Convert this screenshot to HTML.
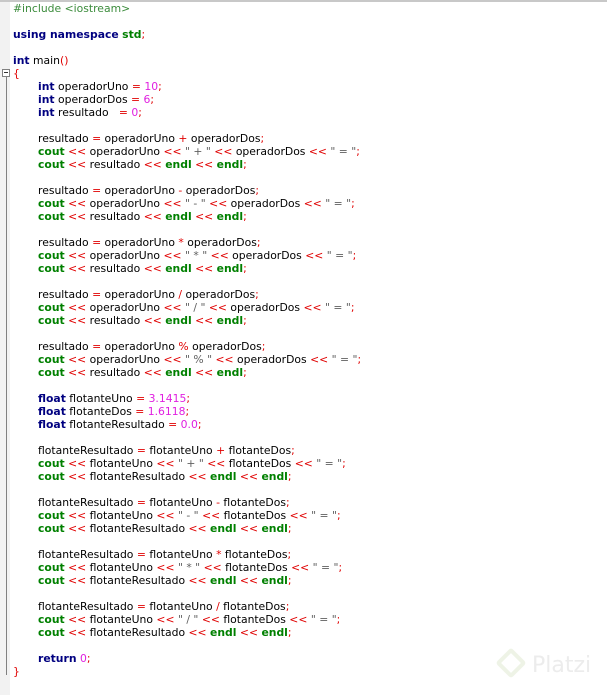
<!DOCTYPE html>
<html><head><meta charset="utf-8"><style>
html,body{margin:0;padding:0;background:#fff;width:607px;height:695px;overflow:hidden;position:relative}
.top{position:absolute;left:0;top:0;width:607px;height:2px;background:#c8c8c8}
.gut{position:absolute;left:0;top:2px;width:10px;height:693px;background:#f2f2f2}
.fold{position:absolute;left:6px;top:77px;width:1px;height:598px;background:#808080}
.box{position:absolute;left:2px;top:69px;width:8px;height:8px;border:1px solid #808080;background:#fff;box-sizing:border-box}
.box:after{content:"";position:absolute;left:1px;top:2px;width:4px;height:1px;background:#333}
.code{position:absolute;left:13px;top:2px;font-family:"DejaVu Sans","Liberation Sans",sans-serif;font-size:10.8px;color:#000}
.l{height:13px;line-height:13px;white-space:pre}
.i{padding-left:25px}
.k{color:#000080;font-weight:bold}
.g{color:#008000;font-weight:bold}
.o{color:#e00000}
.n{color:#e020e0}
.s{color:#606060}
.p{color:#3c8c3c}
.logo{position:absolute;left:500px;top:652px;font-family:"DejaVu Sans",sans-serif;font-size:22px;color:#ececec}
</style></head><body>
<div class="top"></div><div class="gut"></div><div class="fold"></div><div class="box"></div>
<div class="code">
<div class="l"><span class="p">#include &lt;iostream&gt;</span></div>
<div class="l"> </div>
<div class="l"><span class="k">using namespace</span> <span class="g">std</span><span class="o">;</span></div>
<div class="l"> </div>
<div class="l"><span class="k">int</span> main<span class="o">()</span></div>
<div class="l"><span class="o">{</span></div>
<div class="l i"><span class="k">int</span> operadorUno <span class="o">=</span> <span class="n">10</span><span class="o">;</span></div>
<div class="l i"><span class="k">int</span> operadorDos <span class="o">=</span> <span class="n">6</span><span class="o">;</span></div>
<div class="l i"><span class="k">int</span> resultado   <span class="o">=</span> <span class="n">0</span><span class="o">;</span></div>
<div class="l"> </div>
<div class="l i">resultado <span class="o">=</span> operadorUno <span class="o">+</span> operadorDos<span class="o">;</span></div>
<div class="l i"><span class="g">cout</span> <span class="o">&lt;&lt;</span> operadorUno <span class="o">&lt;&lt;</span> <span class="s">" + "</span> <span class="o">&lt;&lt;</span> operadorDos <span class="o">&lt;&lt;</span> <span class="s">" = "</span><span class="o">;</span></div>
<div class="l i"><span class="g">cout</span> <span class="o">&lt;&lt;</span> resultado <span class="o">&lt;&lt;</span> <span class="g">endl</span> <span class="o">&lt;&lt;</span> <span class="g">endl</span><span class="o">;</span></div>
<div class="l"> </div>
<div class="l i">resultado <span class="o">=</span> operadorUno <span class="o">-</span> operadorDos<span class="o">;</span></div>
<div class="l i"><span class="g">cout</span> <span class="o">&lt;&lt;</span> operadorUno <span class="o">&lt;&lt;</span> <span class="s">" - "</span> <span class="o">&lt;&lt;</span> operadorDos <span class="o">&lt;&lt;</span> <span class="s">" = "</span><span class="o">;</span></div>
<div class="l i"><span class="g">cout</span> <span class="o">&lt;&lt;</span> resultado <span class="o">&lt;&lt;</span> <span class="g">endl</span> <span class="o">&lt;&lt;</span> <span class="g">endl</span><span class="o">;</span></div>
<div class="l"> </div>
<div class="l i">resultado <span class="o">=</span> operadorUno <span class="o">*</span> operadorDos<span class="o">;</span></div>
<div class="l i"><span class="g">cout</span> <span class="o">&lt;&lt;</span> operadorUno <span class="o">&lt;&lt;</span> <span class="s">" * "</span> <span class="o">&lt;&lt;</span> operadorDos <span class="o">&lt;&lt;</span> <span class="s">" = "</span><span class="o">;</span></div>
<div class="l i"><span class="g">cout</span> <span class="o">&lt;&lt;</span> resultado <span class="o">&lt;&lt;</span> <span class="g">endl</span> <span class="o">&lt;&lt;</span> <span class="g">endl</span><span class="o">;</span></div>
<div class="l"> </div>
<div class="l i">resultado <span class="o">=</span> operadorUno <span class="o">/</span> operadorDos<span class="o">;</span></div>
<div class="l i"><span class="g">cout</span> <span class="o">&lt;&lt;</span> operadorUno <span class="o">&lt;&lt;</span> <span class="s">" / "</span> <span class="o">&lt;&lt;</span> operadorDos <span class="o">&lt;&lt;</span> <span class="s">" = "</span><span class="o">;</span></div>
<div class="l i"><span class="g">cout</span> <span class="o">&lt;&lt;</span> resultado <span class="o">&lt;&lt;</span> <span class="g">endl</span> <span class="o">&lt;&lt;</span> <span class="g">endl</span><span class="o">;</span></div>
<div class="l"> </div>
<div class="l i">resultado <span class="o">=</span> operadorUno <span class="o">%</span> operadorDos<span class="o">;</span></div>
<div class="l i"><span class="g">cout</span> <span class="o">&lt;&lt;</span> operadorUno <span class="o">&lt;&lt;</span> <span class="s">" % "</span> <span class="o">&lt;&lt;</span> operadorDos <span class="o">&lt;&lt;</span> <span class="s">" = "</span><span class="o">;</span></div>
<div class="l i"><span class="g">cout</span> <span class="o">&lt;&lt;</span> resultado <span class="o">&lt;&lt;</span> <span class="g">endl</span> <span class="o">&lt;&lt;</span> <span class="g">endl</span><span class="o">;</span></div>
<div class="l"> </div>
<div class="l i"><span class="k">float</span> flotanteUno <span class="o">=</span> <span class="n">3.1415</span><span class="o">;</span></div>
<div class="l i"><span class="k">float</span> flotanteDos <span class="o">=</span> <span class="n">1.6118</span><span class="o">;</span></div>
<div class="l i"><span class="k">float</span> flotanteResultado <span class="o">=</span> <span class="n">0.0</span><span class="o">;</span></div>
<div class="l"> </div>
<div class="l i">flotanteResultado <span class="o">=</span> flotanteUno <span class="o">+</span> flotanteDos<span class="o">;</span></div>
<div class="l i"><span class="g">cout</span> <span class="o">&lt;&lt;</span> flotanteUno <span class="o">&lt;&lt;</span> <span class="s">" + "</span> <span class="o">&lt;&lt;</span> flotanteDos <span class="o">&lt;&lt;</span> <span class="s">" = "</span><span class="o">;</span></div>
<div class="l i"><span class="g">cout</span> <span class="o">&lt;&lt;</span> flotanteResultado <span class="o">&lt;&lt;</span> <span class="g">endl</span> <span class="o">&lt;&lt;</span> <span class="g">endl</span><span class="o">;</span></div>
<div class="l"> </div>
<div class="l i">flotanteResultado <span class="o">=</span> flotanteUno <span class="o">-</span> flotanteDos<span class="o">;</span></div>
<div class="l i"><span class="g">cout</span> <span class="o">&lt;&lt;</span> flotanteUno <span class="o">&lt;&lt;</span> <span class="s">" - "</span> <span class="o">&lt;&lt;</span> flotanteDos <span class="o">&lt;&lt;</span> <span class="s">" = "</span><span class="o">;</span></div>
<div class="l i"><span class="g">cout</span> <span class="o">&lt;&lt;</span> flotanteResultado <span class="o">&lt;&lt;</span> <span class="g">endl</span> <span class="o">&lt;&lt;</span> <span class="g">endl</span><span class="o">;</span></div>
<div class="l"> </div>
<div class="l i">flotanteResultado <span class="o">=</span> flotanteUno <span class="o">*</span> flotanteDos<span class="o">;</span></div>
<div class="l i"><span class="g">cout</span> <span class="o">&lt;&lt;</span> flotanteUno <span class="o">&lt;&lt;</span> <span class="s">" * "</span> <span class="o">&lt;&lt;</span> flotanteDos <span class="o">&lt;&lt;</span> <span class="s">" = "</span><span class="o">;</span></div>
<div class="l i"><span class="g">cout</span> <span class="o">&lt;&lt;</span> flotanteResultado <span class="o">&lt;&lt;</span> <span class="g">endl</span> <span class="o">&lt;&lt;</span> <span class="g">endl</span><span class="o">;</span></div>
<div class="l"> </div>
<div class="l i">flotanteResultado <span class="o">=</span> flotanteUno <span class="o">/</span> flotanteDos<span class="o">;</span></div>
<div class="l i"><span class="g">cout</span> <span class="o">&lt;&lt;</span> flotanteUno <span class="o">&lt;&lt;</span> <span class="s">" / "</span> <span class="o">&lt;&lt;</span> flotanteDos <span class="o">&lt;&lt;</span> <span class="s">" = "</span><span class="o">;</span></div>
<div class="l i"><span class="g">cout</span> <span class="o">&lt;&lt;</span> flotanteResultado <span class="o">&lt;&lt;</span> <span class="g">endl</span> <span class="o">&lt;&lt;</span> <span class="g">endl</span><span class="o">;</span></div>
<div class="l"> </div>
<div class="l i"><span class="k">return</span> <span class="n">0</span><span class="o">;</span></div>
<div class="l"><span class="o">}</span></div>
</div>
<div class="logo"><span style="display:inline-block;width:14px;height:14px;border:4px solid #eef3e6;border-radius:3px;transform:rotate(45deg);margin-right:10px;vertical-align:-2px"></span>Platzi</div>
</body></html>
